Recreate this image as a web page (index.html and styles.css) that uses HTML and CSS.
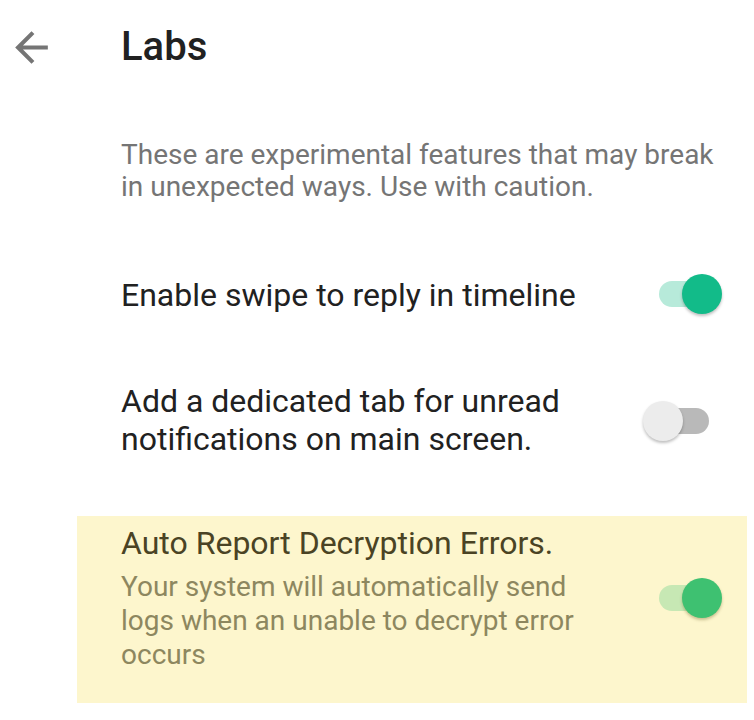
FILE: index.html
```html
<!DOCTYPE html>
<html>
<head>
<meta charset="utf-8">
<link rel="stylesheet" href="styles.css">
</head>
<body>
<div class="screen">
  <header class="toolbar">
    <button class="back" aria-label="Back">
      <svg viewBox="0 0 24 24" width="49" height="49"><path d="M20 11H7.83l5.59-5.59L12 4l-8 8 8 8 1.41-1.41L7.83 13H20v-2z" fill="#757575"/></svg>
    </button>
    <h1 class="title">Labs</h1>
  </header>
  <p class="intro">These are experimental features that may break in unexpected ways. Use with caution.</p>
  <div class="row row-one">
    <div class="text">Enable swipe to reply in timeline</div>
    <div class="switch on"><span class="track"></span><span class="thumb"></span></div>
  </div>
  <div class="row row-two">
    <div class="text">Add a dedicated tab for unread notifications on main screen.</div>
    <div class="switch off"><span class="track"></span><span class="thumb"></span></div>
  </div>
  <div class="highlight">
    <div class="hl-text">
      <div class="hl-title">Auto Report Decryption Errors.</div>
      <div class="hl-sub">Your system will automatically send logs when an unable to decrypt error occurs</div>
    </div>
    <div class="switch on hl"><span class="track"></span><span class="thumb"></span></div>
  </div>
</div>
</body>
</html>
```

FILE: styles.css
```css
html, body {
  margin: 0;
  padding: 0;
  background: #ffffff;
}
.screen {
  width: 754px;
  height: 720px;
  font-family: Roboto, "Noto Sans", sans-serif;
  overflow: hidden;
}
.toolbar {
  display: flex;
  align-items: center;
  height: 94px;
}
.back {
  border: 0;
  background: none;
  padding: 0;
  margin: 0 0 0 7px;
  width: 49px;
  height: 49px;
  display: flex;
}
.title {
  margin: 0 0 0 65px;
  font-size: 40px;
  font-weight: 500;
  color: #212121;
  line-height: 1;
}
.intro {
  margin: 44.5px 20px 0 121px;
  font-size: 28px;
  line-height: 32.5px;
  color: #757575;
}
.row {
  display: flex;
  align-items: center;
  justify-content: space-between;
  padding: 0 32px 0 121px;
}
.row-one {
  margin-top: 70.5px;
}
.row-one .switch {
  margin-bottom: 3px;
}
.row-two {
  margin-top: 66px;
}
.text {
  font-size: 32px;
  line-height: 37.5px;
  color: #212121;
  max-width: 480px;
}
.switch {
  position: relative;
  width: 79px;
  height: 40px;
  flex: none;
}
.track {
  position: absolute;
  left: 16px;
  top: 7px;
  width: 50px;
  height: 26px;
  border-radius: 13px;
}
.thumb {
  position: absolute;
  top: 0;
  width: 40px;
  height: 40px;
  border-radius: 50%;
  box-shadow: 0 2px 3px rgba(0,0,0,0.25);
}
.switch.on .track { background: #b7eada; }
.switch.on .thumb { left: 39px; background: #12bb89; }
.switch.off .track { background: #b9b9b9; }
.switch.off .thumb { left: 0; background: #ececec; }
.switch.hl .track { background: #c7e8b4; }
.switch.hl .thumb { background: #3ec171; box-shadow: 0 2px 3px rgba(80,70,0,0.3); }
.highlight {
  margin: 58px 7px 0 77px;
  background: #fdf6cd;
  display: flex;
  align-items: flex-start;
  justify-content: space-between;
  padding: 9px 25px 31px 44px;
}
.highlight .switch {
  margin-top: 53px;
}
.hl-title {
  font-size: 32px;
  line-height: 37.5px;
  color: #4a4324;
}
.hl-sub {
  margin-top: 7px;
  font-size: 28px;
  line-height: 34px;
  color: #8d875f;
  max-width: 470px;
}
```
